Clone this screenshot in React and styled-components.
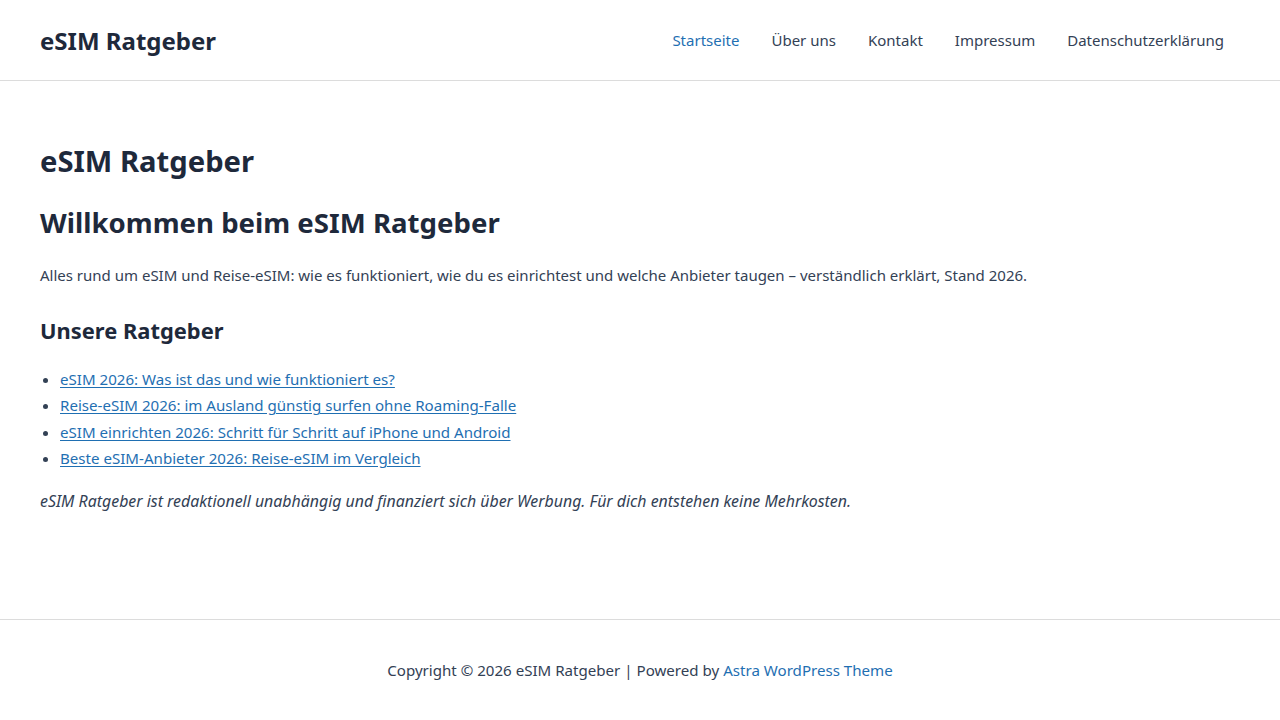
import React from "react";
import styled, { createGlobalStyle } from "styled-components";

const GlobalStyle = createGlobalStyle`
  html, body { margin: 0; padding: 0; background: #ffffff; }
  body {
    font-family: "Noto Sans", "Open Sans", sans-serif;
    color: #334155;
    font-size: 15px;
    -webkit-font-smoothing: antialiased;
  }
  * { box-sizing: border-box; }
`;

const Page = styled.div`
  min-height: 100vh;
  display: flex;
  flex-direction: column;
`;

const Header = styled.header`
  height: 81px;
  border-bottom: 1px solid #dcdcdc;
  padding: 0 40px;
  display: flex;
  align-items: center;
  justify-content: space-between;
`;

const SiteTitle = styled.a`
  font-size: 24px;
  font-weight: 700;
  color: #1e293b;
  text-decoration: none;
`;

const Nav = styled.nav`
  display: flex;
  align-items: center;
`;

const NavLink = styled.a`
  padding: 0 16px;
  font-size: 15px;
  color: ${(p) => (p.$active ? "#1f6fb2" : "#334155")};
  text-decoration: none;
`;

const Main = styled.main`
  flex: 1;
  padding: 61px 40px 40px;
`;

const PageTitle = styled.h1`
  margin: 0 0 24px;
  font-size: 29.2px;
  line-height: 38px;
  font-weight: 700;
  color: #1e293b;
`;

const Heading = styled.h2`
  margin: 0 0 22px;
  font-size: 27.6px;
  line-height: 36px;
  font-weight: 700;
  color: #1e293b;
`;

const SubHeading = styled.h3`
  margin: 0 0 21px;
  font-size: 21.9px;
  line-height: 29px;
  font-weight: 700;
  color: #1e293b;
`;

const Text = styled.p`
  margin: 0 0 ${(p) => (p.$gap ? p.$gap : 0)}px;
  font-size: ${(p) => (p.$italic ? "15.9px" : "15px")};
  line-height: 26px;
  font-style: ${(p) => (p.$italic ? "italic" : "normal")};
`;

const List = styled.ul`
  margin: 0 0 16px;
  padding-left: 20px;
`;

const Item = styled.li`
  font-size: 15.1px;
  line-height: 26.4px;
`;

const ItemLink = styled.a`
  color: #1f6fb2;
  text-decoration: underline;
  text-underline-offset: 2px;
`;

const Footer = styled.footer`
  height: 101px;
  border-top: 1px solid #dcdcdc;
  display: flex;
  align-items: center;
  justify-content: center;
  font-size: 15.1px;
  color: #334155;
`;

const FooterLink = styled.a`
  color: #1f6fb2;
  text-decoration: none;
  margin-left: 4px;
`;

const navItems = ["Startseite", "Über uns", "Kontakt", "Impressum", "Datenschutzerklärung"];

const guides = [
  "eSIM 2026: Was ist das und wie funktioniert es?",
  "Reise-eSIM 2026: im Ausland günstig surfen ohne Roaming-Falle",
  "eSIM einrichten 2026: Schritt für Schritt auf iPhone und Android",
  "Beste eSIM-Anbieter 2026: Reise-eSIM im Vergleich",
];

export default function App() {
  return (
    <>
      <GlobalStyle />
      <Page>
        <Header>
          <SiteTitle href="#">eSIM Ratgeber</SiteTitle>
          <Nav>
            {navItems.map((item, i) => (
              <NavLink key={item} href="#" $active={i === 0}>
                {item}
              </NavLink>
            ))}
          </Nav>
        </Header>
        <Main>
          <PageTitle>eSIM Ratgeber</PageTitle>
          <Heading>Willkommen beim eSIM Ratgeber</Heading>
          <Text $gap={28}>
            Alles rund um eSIM und Reise-eSIM: wie es funktioniert, wie du es einrichtest und welche
            Anbieter taugen – verständlich erklärt, Stand 2026.
          </Text>
          <SubHeading>Unsere Ratgeber</SubHeading>
          <List>
            {guides.map((g) => (
              <Item key={g}>
                <ItemLink href="#">{g}</ItemLink>
              </Item>
            ))}
          </List>
          <Text $italic>
            eSIM Ratgeber ist redaktionell unabhängig und finanziert sich über Werbung. Für dich
            entstehen keine Mehrkosten.
          </Text>
        </Main>
        <Footer>
          Copyright © 2026 eSIM Ratgeber | Powered by
          <FooterLink href="#">Astra WordPress Theme</FooterLink>
        </Footer>
      </Page>
    </>
  );
}
